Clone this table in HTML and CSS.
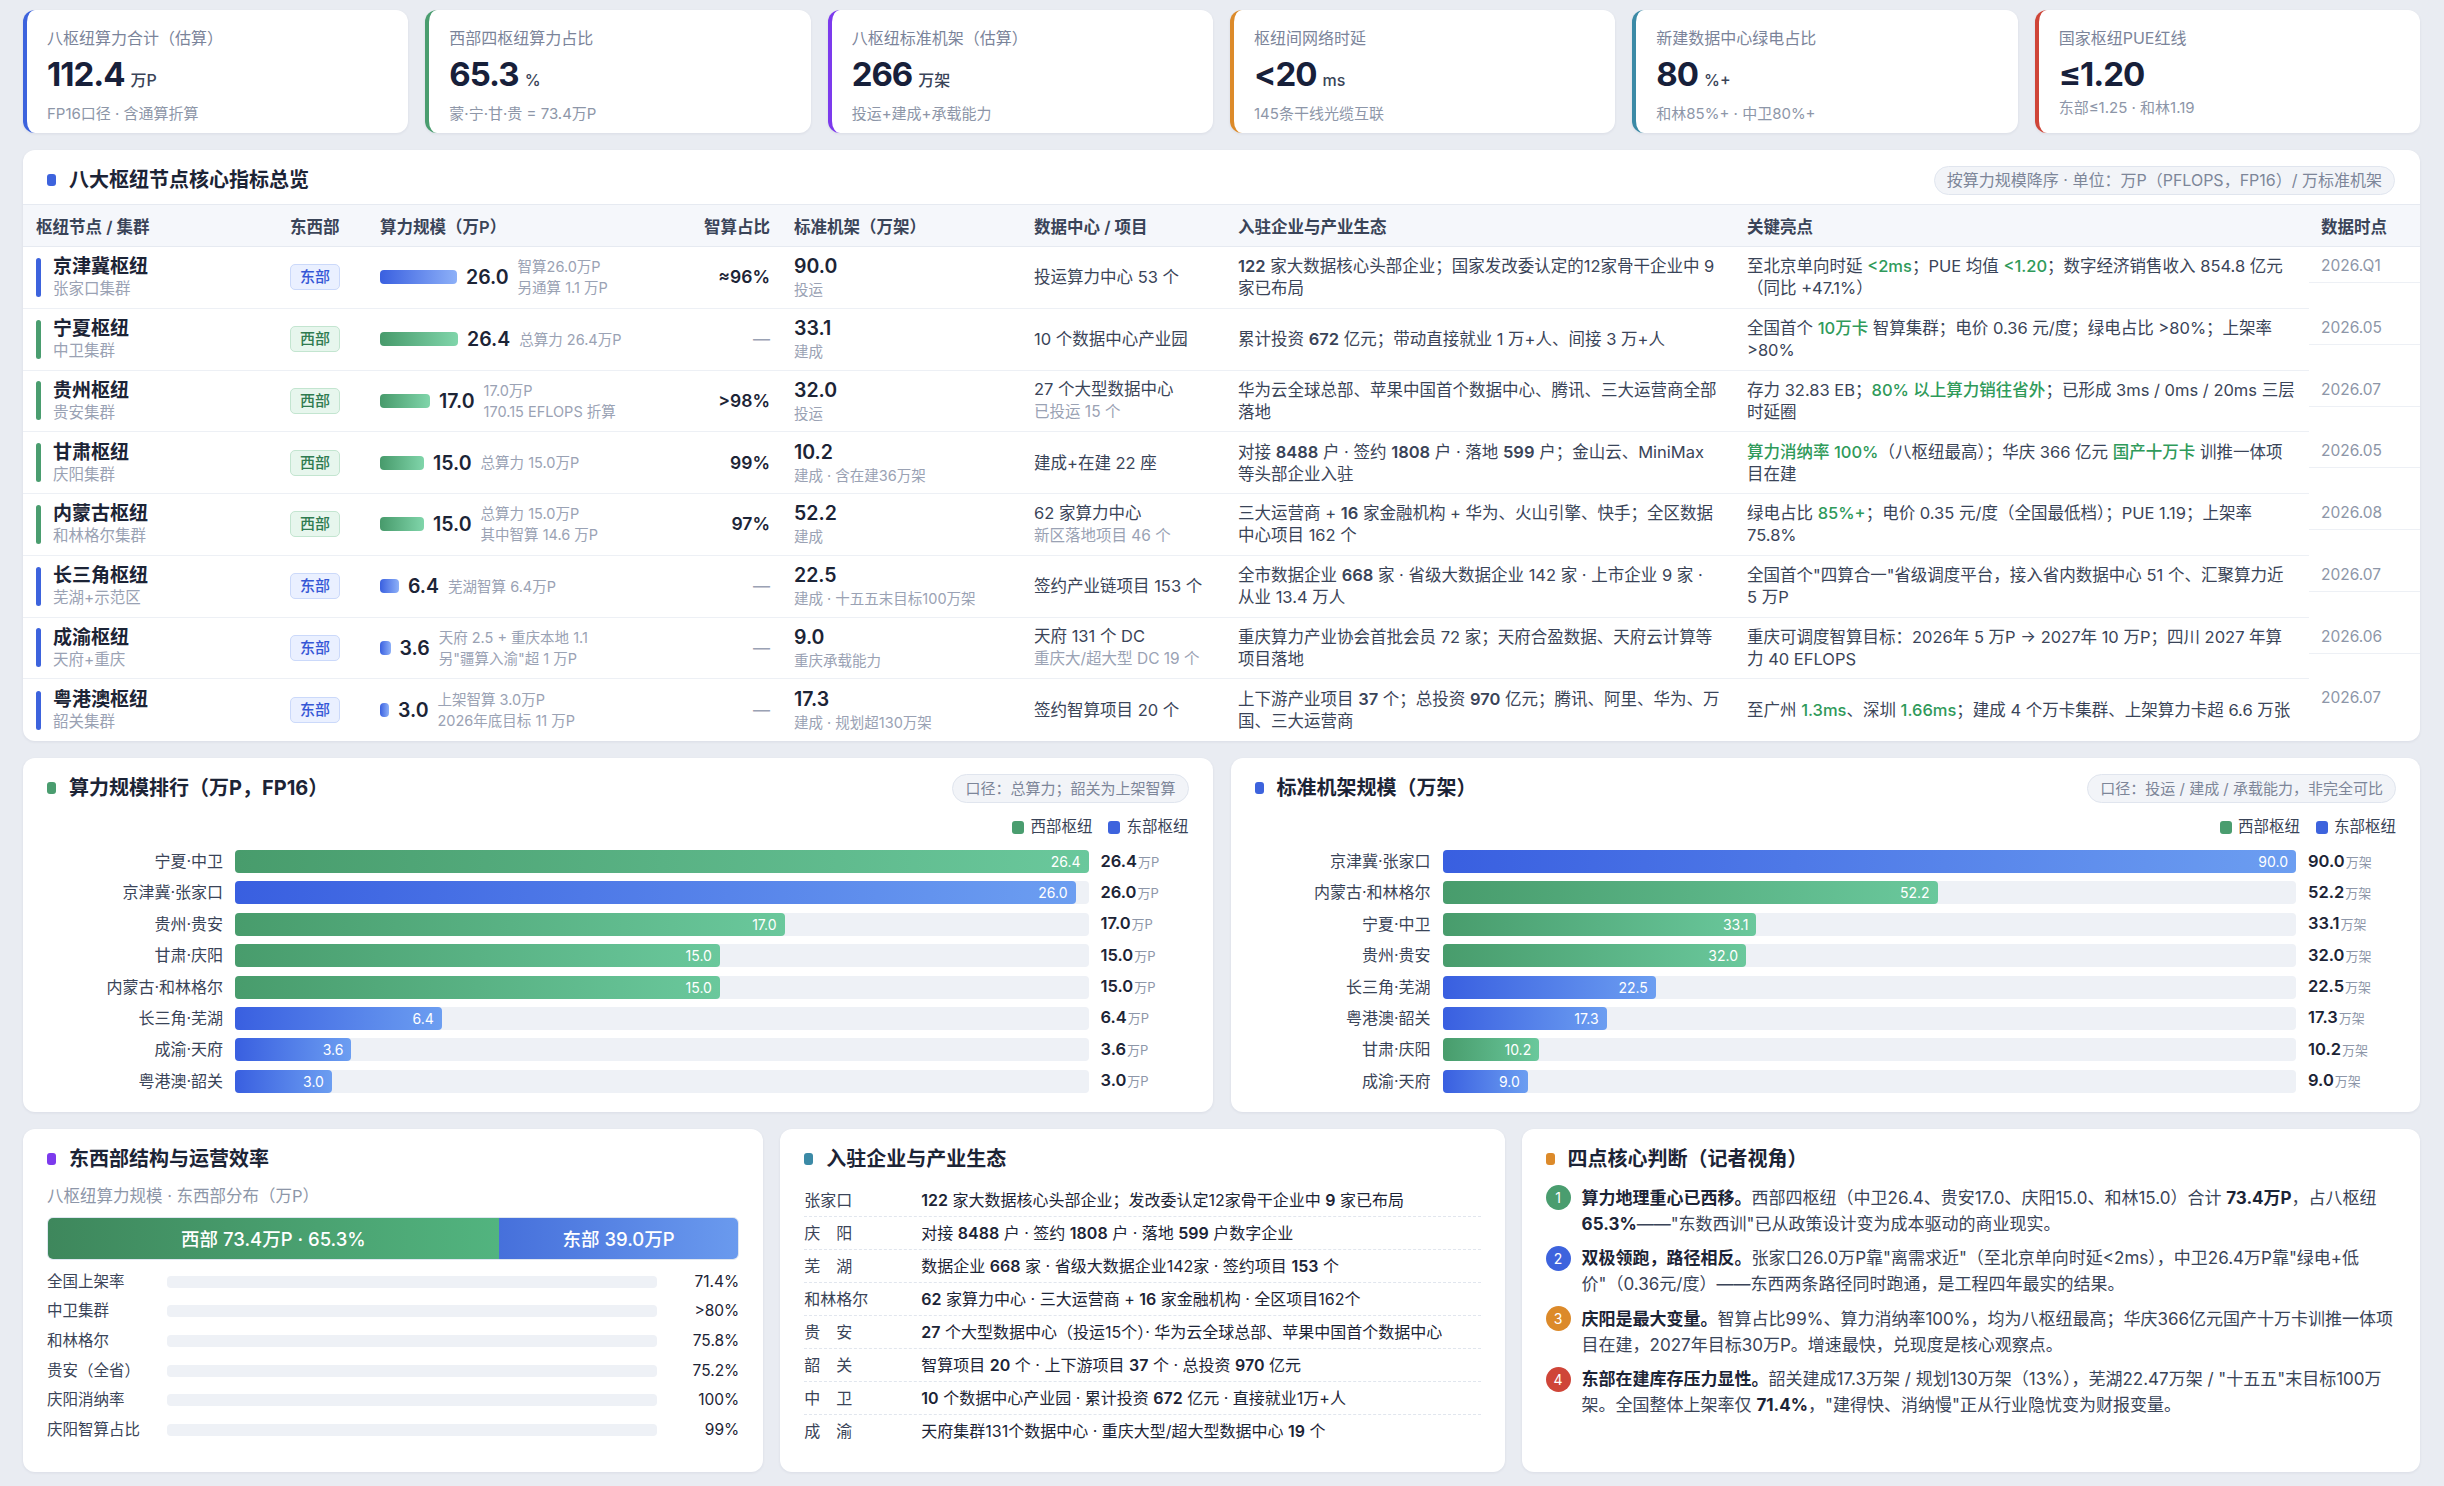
FILE: index.html
```html
<!DOCTYPE html>
<html lang="zh-CN">
<head>
<meta charset="utf-8">
<title>八大枢纽节点核心指标</title>
<link rel="stylesheet" href="styles.css">
</head>
<body>
<div class="page">

  <section class="kpis">
    <div class="kpi acc-blue">
      <div class="kpi-label">八枢纽算力合计（估算）</div>
      <div class="kpi-value">112.4<span class="unit">万P</span></div>
      <div class="kpi-sub">FP16口径 · 含通算折算</div>
    </div>
    <div class="kpi acc-green">
      <div class="kpi-label">西部四枢纽算力占比</div>
      <div class="kpi-value">65.3<span class="unit">%</span></div>
      <div class="kpi-sub">蒙·宁·甘·贵 = 73.4万P</div>
    </div>
    <div class="kpi acc-purple">
      <div class="kpi-label">八枢纽标准机架（估算）</div>
      <div class="kpi-value">266<span class="unit">万架</span></div>
      <div class="kpi-sub">投运+建成+承载能力</div>
    </div>
    <div class="kpi acc-orange">
      <div class="kpi-label">枢纽间网络时延</div>
      <div class="kpi-value">&lt;20<span class="unit">ms</span></div>
      <div class="kpi-sub">145条干线光缆互联</div>
    </div>
    <div class="kpi acc-teal">
      <div class="kpi-label">新建数据中心绿电占比</div>
      <div class="kpi-value">80<span class="unit">%+</span></div>
      <div class="kpi-sub">和林85%+ · 中卫80%+</div>
    </div>
    <div class="kpi acc-red">
      <div class="kpi-label">国家枢纽PUE红线</div>
      <div class="kpi-value">≤1.20</div>
      <div class="kpi-sub">东部≤1.25 · 和林1.19</div>
    </div>
  </section>

  <section class="card table-card">
    <div class="card-head">
      <h2 class="card-title"><i class="dot dot-blue"></i>八大枢纽节点核心指标总览</h2>
      <span class="pill pill-lg">按算力规模降序 · 单位：万P（PFLOPS，FP16）/ 万标准机架</span>
    </div>
    <table class="hub-table">
      <colgroup>
        <col class="c1"><col class="c2"><col class="c3"><col class="c4"><col class="c5"><col class="c6"><col class="c7"><col class="c8"><col>
      </colgroup>
      <thead>
        <tr>
          <th class="first">枢纽节点 / 集群</th>
          <th>东西部</th>
          <th>算力规模（万P）</th>
          <th class="right">智算占比</th>
          <th>标准机架（万架）</th>
          <th>数据中心 / 项目</th>
          <th>入驻企业与产业生态</th>
          <th>关键亮点</th>
          <th>数据时点</th>
        </tr>
      </thead>
      <tbody>
        <tr>
          <td class="first"><div class="hub east"><div><div class="hub-name">京津冀枢纽</div><div class="hub-sub">张家口集群</div></div></div></td>
          <td><span class="badge east">东部</span></td>
          <td><div class="scale"><span class="mini-bar east" style="width:77px"></span><span class="scale-val">26.0</span><span class="scale-sub">智算26.0万P<br>另通算 1.1 万P</span></div></td>
          <td class="right"><span class="pct">≈96%</span></td>
          <td><div class="rack">90.0</div><div class="rack-sub">投运</div></td>
          <td class="dc">投运算力中心 53 个</td>
          <td class="eco"><b>122</b> 家大数据核心头部企业；国家发改委认定的12家骨干企业中 9 家已布局</td>
          <td class="hl">至北京单向时延 <em>&lt;2ms</em>；PUE 均值 <em>&lt;1.20</em>；数字经济销售收入 854.8 亿元（同比 +47.1%）</td>
          <td class="date"><div class="date-inner">2026.Q1</div></td>
        </tr>
        <tr>
          <td class="first"><div class="hub west"><div><div class="hub-name">宁夏枢纽</div><div class="hub-sub">中卫集群</div></div></div></td>
          <td><span class="badge west">西部</span></td>
          <td><div class="scale"><span class="mini-bar west" style="width:78px"></span><span class="scale-val">26.4</span><span class="scale-sub">总算力 26.4万P</span></div></td>
          <td class="right"><span class="dash">—</span></td>
          <td><div class="rack">33.1</div><div class="rack-sub">建成</div></td>
          <td class="dc">10 个数据中心产业园</td>
          <td class="eco">累计投资 <b>672</b> 亿元；带动直接就业 1 万+人、间接 3 万+人</td>
          <td class="hl">全国首个 <em>10万卡</em> 智算集群；电价 0.36 元/度；绿电占比 &gt;80%；上架率 &gt;80%</td>
          <td class="date"><div class="date-inner">2026.05</div></td>
        </tr>
        <tr>
          <td class="first"><div class="hub west"><div><div class="hub-name">贵州枢纽</div><div class="hub-sub">贵安集群</div></div></div></td>
          <td><span class="badge west">西部</span></td>
          <td><div class="scale"><span class="mini-bar west" style="width:50px"></span><span class="scale-val">17.0</span><span class="scale-sub">17.0万P<br>170.15 EFLOPS 折算</span></div></td>
          <td class="right"><span class="pct">&gt;98%</span></td>
          <td><div class="rack">32.0</div><div class="rack-sub">投运</div></td>
          <td class="dc">27 个大型数据中心<br><span class="dc-sub">已投运 15 个</span></td>
          <td class="eco">华为云全球总部、苹果中国首个数据中心、腾讯、三大运营商全部落地</td>
          <td class="hl">存力 32.83 EB；<em>80% 以上算力销往省外</em>；已形成 3ms / 0ms / 20ms 三层时延圈</td>
          <td class="date"><div class="date-inner">2026.07</div></td>
        </tr>
        <tr>
          <td class="first"><div class="hub west"><div><div class="hub-name">甘肃枢纽</div><div class="hub-sub">庆阳集群</div></div></div></td>
          <td><span class="badge west">西部</span></td>
          <td><div class="scale"><span class="mini-bar west" style="width:44px"></span><span class="scale-val">15.0</span><span class="scale-sub">总算力 15.0万P</span></div></td>
          <td class="right"><span class="pct">99%</span></td>
          <td><div class="rack">10.2</div><div class="rack-sub">建成 · 含在建36万架</div></td>
          <td class="dc">建成+在建 22 座</td>
          <td class="eco">对接 <b>8488</b> 户 · 签约 <b>1808</b> 户 · 落地 <b>599</b> 户；金山云、MiniMax 等头部企业入驻</td>
          <td class="hl"><em>算力消纳率 100%</em>（八枢纽最高）；华庆 366 亿元 <em>国产十万卡</em> 训推一体项目在建</td>
          <td class="date"><div class="date-inner">2026.05</div></td>
        </tr>
        <tr>
          <td class="first"><div class="hub west"><div><div class="hub-name">内蒙古枢纽</div><div class="hub-sub">和林格尔集群</div></div></div></td>
          <td><span class="badge west">西部</span></td>
          <td><div class="scale"><span class="mini-bar west" style="width:44px"></span><span class="scale-val">15.0</span><span class="scale-sub">总算力 15.0万P<br>其中智算 14.6 万P</span></div></td>
          <td class="right"><span class="pct">97%</span></td>
          <td><div class="rack">52.2</div><div class="rack-sub">建成</div></td>
          <td class="dc">62 家算力中心<br><span class="dc-sub">新区落地项目 46 个</span></td>
          <td class="eco">三大运营商 + <b>16</b> 家金融机构 + 华为、火山引擎、快手；全区数据中心项目 162 个</td>
          <td class="hl">绿电占比 <em>85%+</em>；电价 0.35 元/度（全国最低档）；PUE 1.19；上架率 75.8%</td>
          <td class="date"><div class="date-inner">2026.08</div></td>
        </tr>
        <tr>
          <td class="first"><div class="hub east"><div><div class="hub-name">长三角枢纽</div><div class="hub-sub">芜湖+示范区</div></div></div></td>
          <td><span class="badge east">东部</span></td>
          <td><div class="scale"><span class="mini-bar east" style="width:19px"></span><span class="scale-val">6.4</span><span class="scale-sub">芜湖智算 6.4万P</span></div></td>
          <td class="right"><span class="dash">—</span></td>
          <td><div class="rack">22.5</div><div class="rack-sub">建成 · 十五五末目标100万架</div></td>
          <td class="dc">签约产业链项目 153 个</td>
          <td class="eco">全市数据企业 <b>668</b> 家 · 省级大数据企业 142 家 · 上市企业 9 家 · 从业 13.4 万人</td>
          <td class="hl">全国首个"四算合一"省级调度平台，接入省内数据中心 51 个、汇聚算力近 5 万P</td>
          <td class="date"><div class="date-inner">2026.07</div></td>
        </tr>
        <tr>
          <td class="first"><div class="hub east"><div><div class="hub-name">成渝枢纽</div><div class="hub-sub">天府+重庆</div></div></div></td>
          <td><span class="badge east">东部</span></td>
          <td><div class="scale"><span class="mini-bar east" style="width:10.5px"></span><span class="scale-val">3.6</span><span class="scale-sub">天府 2.5 + 重庆本地 1.1<br>另"疆算入渝"超 1 万P</span></div></td>
          <td class="right"><span class="dash">—</span></td>
          <td><div class="rack">9.0</div><div class="rack-sub">重庆承载能力</div></td>
          <td class="dc">天府 131 个 DC<br><span class="dc-sub">重庆大/超大型 DC 19 个</span></td>
          <td class="eco">重庆算力产业协会首批会员 72 家；天府合盈数据、天府云计算等项目落地</td>
          <td class="hl">重庆可调度智算目标：2026年 5 万P → 2027年 10 万P；四川 2027 年算力 40 EFLOPS</td>
          <td class="date"><div class="date-inner">2026.06</div></td>
        </tr>
        <tr class="last">
          <td class="first"><div class="hub east"><div><div class="hub-name">粤港澳枢纽</div><div class="hub-sub">韶关集群</div></div></div></td>
          <td><span class="badge east">东部</span></td>
          <td><div class="scale"><span class="mini-bar east" style="width:9px"></span><span class="scale-val">3.0</span><span class="scale-sub">上架智算 3.0万P<br>2026年底目标 11 万P</span></div></td>
          <td class="right"><span class="dash">—</span></td>
          <td><div class="rack">17.3</div><div class="rack-sub">建成 · 规划超130万架</div></td>
          <td class="dc">签约智算项目 20 个</td>
          <td class="eco">上下游产业项目 <b>37</b> 个；总投资 <b>970</b> 亿元；腾讯、阿里、华为、万国、三大运营商</td>
          <td class="hl">至广州 <em>1.3ms</em>、深圳 <em>1.66ms</em>；建成 4 个万卡集群、上架算力卡超 6.6 万张</td>
          <td class="date"><div class="date-inner">2026.07</div></td>
        </tr>
      </tbody>
    </table>
  </section>

  <section class="charts">
    <div class="card chart-card">
      <div class="chart-head">
        <h2 class="card-title"><i class="dot dot-green"></i>算力规模排行（万P，FP16）</h2>
        <span class="pill">口径：总算力；韶关为上架智算</span>
      </div>
      <div class="legend"><span class="lg"><i class="sq west"></i>西部枢纽</span><span class="lg"><i class="sq east"></i>东部枢纽</span></div>
      <div class="bars">
        <span class="bl">宁夏·中卫</span><div class="track"><div class="fill west" style="width:100%">26.4</div></div><span class="bv">26.4<small>万P</small></span>
        <span class="bl">京津冀·张家口</span><div class="track"><div class="fill east" style="width:98.48%">26.0</div></div><span class="bv">26.0<small>万P</small></span>
        <span class="bl">贵州·贵安</span><div class="track"><div class="fill west" style="width:64.39%">17.0</div></div><span class="bv">17.0<small>万P</small></span>
        <span class="bl">甘肃·庆阳</span><div class="track"><div class="fill west" style="width:56.82%">15.0</div></div><span class="bv">15.0<small>万P</small></span>
        <span class="bl">内蒙古·和林格尔</span><div class="track"><div class="fill west" style="width:56.82%">15.0</div></div><span class="bv">15.0<small>万P</small></span>
        <span class="bl">长三角·芜湖</span><div class="track"><div class="fill east" style="width:24.24%">6.4</div></div><span class="bv">6.4<small>万P</small></span>
        <span class="bl">成渝·天府</span><div class="track"><div class="fill east" style="width:13.64%">3.6</div></div><span class="bv">3.6<small>万P</small></span>
        <span class="bl">粤港澳·韶关</span><div class="track"><div class="fill east" style="width:11.36%">3.0</div></div><span class="bv">3.0<small>万P</small></span>
      </div>
    </div>
    <div class="card chart-card">
      <div class="chart-head">
        <h2 class="card-title"><i class="dot dot-blue"></i>标准机架规模（万架）</h2>
        <span class="pill">口径：投运 / 建成 / 承载能力，非完全可比</span>
      </div>
      <div class="legend"><span class="lg"><i class="sq west"></i>西部枢纽</span><span class="lg"><i class="sq east"></i>东部枢纽</span></div>
      <div class="bars">
        <span class="bl">京津冀·张家口</span><div class="track"><div class="fill east" style="width:100%">90.0</div></div><span class="bv">90.0<small>万架</small></span>
        <span class="bl">内蒙古·和林格尔</span><div class="track"><div class="fill west" style="width:58%">52.2</div></div><span class="bv">52.2<small>万架</small></span>
        <span class="bl">宁夏·中卫</span><div class="track"><div class="fill west" style="width:36.78%">33.1</div></div><span class="bv">33.1<small>万架</small></span>
        <span class="bl">贵州·贵安</span><div class="track"><div class="fill west" style="width:35.56%">32.0</div></div><span class="bv">32.0<small>万架</small></span>
        <span class="bl">长三角·芜湖</span><div class="track"><div class="fill east" style="width:25%">22.5</div></div><span class="bv">22.5<small>万架</small></span>
        <span class="bl">粤港澳·韶关</span><div class="track"><div class="fill east" style="width:19.22%">17.3</div></div><span class="bv">17.3<small>万架</small></span>
        <span class="bl">甘肃·庆阳</span><div class="track"><div class="fill west" style="width:11.33%">10.2</div></div><span class="bv">10.2<small>万架</small></span>
        <span class="bl">成渝·天府</span><div class="track"><div class="fill east" style="width:10%">9.0</div></div><span class="bv">9.0<small>万架</small></span>
      </div>
    </div>
  </section>

  <section class="bottom">
    <div class="card small-card">
      <h2 class="card-title"><i class="dot dot-purple"></i>东西部结构与运营效率</h2>
      <div class="subtitle">八枢纽算力规模 · 东西部分布（万P）</div>
      <div class="split">
        <div class="split-west" style="width:65.3%">西部 73.4万P · 65.3%</div>
        <div class="split-east">东部 39.0万P</div>
      </div>
      <div class="eff">
        <span class="el">全国上架率</span><span class="et"></span><span class="ev">71.4%</span>
        <span class="el">中卫集群</span><span class="et"></span><span class="ev">&gt;80%</span>
        <span class="el">和林格尔</span><span class="et"></span><span class="ev">75.8%</span>
        <span class="el">贵安（全省）</span><span class="et"></span><span class="ev">75.2%</span>
        <span class="el">庆阳消纳率</span><span class="et"></span><span class="ev">100%</span>
        <span class="el">庆阳智算占比</span><span class="et"></span><span class="ev">99%</span>
      </div>
    </div>

    <div class="card small-card">
      <h2 class="card-title"><i class="dot dot-teal"></i>入驻企业与产业生态</h2>
      <div class="eco-list">
        <div class="eco-row"><span class="eco-l">张家口</span><span class="eco-t"><b>122</b> 家大数据核心头部企业；发改委认定12家骨干企业中 <b>9</b> 家已布局</span></div>
        <div class="eco-row"><span class="eco-l">庆　阳</span><span class="eco-t">对接 <b>8488</b> 户 · 签约 <b>1808</b> 户 · 落地 <b>599</b> 户数字企业</span></div>
        <div class="eco-row"><span class="eco-l">芜　湖</span><span class="eco-t">数据企业 <b>668</b> 家 · 省级大数据企业142家 · 签约项目 <b>153</b> 个</span></div>
        <div class="eco-row"><span class="eco-l">和林格尔</span><span class="eco-t"><b>62</b> 家算力中心 · 三大运营商 + <b>16</b> 家金融机构 · 全区项目162个</span></div>
        <div class="eco-row"><span class="eco-l">贵　安</span><span class="eco-t"><b>27</b> 个大型数据中心（投运15个）· 华为云全球总部、苹果中国首个数据中心</span></div>
        <div class="eco-row"><span class="eco-l">韶　关</span><span class="eco-t">智算项目 <b>20</b> 个 · 上下游项目 <b>37</b> 个 · 总投资 <b>970</b> 亿元</span></div>
        <div class="eco-row"><span class="eco-l">中　卫</span><span class="eco-t"><b>10</b> 个数据中心产业园 · 累计投资 <b>672</b> 亿元 · 直接就业1万+人</span></div>
        <div class="eco-row"><span class="eco-l">成　渝</span><span class="eco-t">天府集群131个数据中心 · 重庆大型/超大型数据中心 <b>19</b> 个</span></div>
      </div>
    </div>

    <div class="card small-card">
      <h2 class="card-title"><i class="dot dot-orange"></i>四点核心判断（记者视角）</h2>
      <ol class="judge">
        <li><span class="num n-green">1</span><p><b>算力地理重心已西移。</b>西部四枢纽（中卫26.4、贵安17.0、庆阳15.0、和林15.0）合计 <b>73.4万P</b>，占八枢纽 <b>65.3%</b>——"东数西训"已从政策设计变为成本驱动的商业现实。</p></li>
        <li><span class="num n-blue">2</span><p><b>双极领跑，路径相反。</b>张家口26.0万P靠"离需求近"（至北京单向时延&lt;2ms），中卫26.4万P靠"绿电+低价"（0.36元/度）——东西两条路径同时跑通，是工程四年最实的结果。</p></li>
        <li><span class="num n-orange">3</span><p><b>庆阳是最大变量。</b>智算占比99%、算力消纳率100%，均为八枢纽最高；华庆366亿元国产十万卡训推一体项目在建，2027年目标30万P。增速最快，兑现度是核心观察点。</p></li>
        <li><span class="num n-red">4</span><p><b>东部在建库存压力显性。</b>韶关建成17.3万架 / 规划130万架（13%），芜湖22.47万架 / "十五五"末目标100万架。全国整体上架率仅 <b>71.4%</b>，"建得快、消纳慢"正从行业隐忧变为财报变量。</p></li>
      </ol>
    </div>
  </section>

</div>
</body>
</html>
```

FILE: styles.css
```css
* { box-sizing: border-box; }

html, body {
  margin: 0;
  background: #e9ecf2;
}

body {
  font-family: Inter, "Noto Sans CJK SC", sans-serif;
  color: #1c2436;
}

.page {
  padding: 10px 24px 18px 23px;
  display: flex;
  flex-direction: column;
  gap: 17px;
}

/* ---------- KPI cards ---------- */
.kpis {
  display: grid;
  grid-template-columns: repeat(6, 1fr);
  gap: 17px;
}

.kpi {
  background: #fff;
  border-radius: 12px;
  border-left: 4px solid #3d63dd;
  padding: 17px 20px 15px 20px;
  box-shadow: 0 1px 3px rgba(22, 34, 64, 0.07);
  height: 123px;
}

.acc-blue { border-left-color: #3d63dd; }
.acc-green { border-left-color: #4a9d6f; }
.acc-purple { border-left-color: #7c3aed; }
.acc-orange { border-left-color: #dc8a2a; }
.acc-teal { border-left-color: #3b8aa6; }
.acc-red { border-left-color: #cf4538; }

.kpi-label {
  font-size: 16px;
  line-height: 22px;
  color: #7b849a;
}

.kpi-value {
  margin-top: 5px;
  font-size: 33px;
  line-height: 40px;
  font-weight: 700;
  letter-spacing: -1px;
  color: #17203a;
}

.kpi-value .unit {
  font-size: 16px;
  font-weight: 500;
  letter-spacing: 0;
  margin-left: 6px;
  color: #3a4458;
}

.kpi-sub {
  margin-top: 4px;
  font-size: 15px;
  line-height: 20px;
  color: #8d96a8;
}

/* ---------- generic card ---------- */
.card {
  background: #fff;
  border-radius: 12px;
  box-shadow: 0 1px 3px rgba(22, 34, 64, 0.07);
}

.card-title {
  margin: 0;
  display: flex;
  align-items: center;
  gap: 13px;
  font-size: 20px;
  line-height: 24px;
  font-weight: 700;
  color: #1c2436;
}

.dot {
  display: inline-block;
  width: 9px;
  height: 12px;
  border-radius: 3px;
  flex: none;
}
.dot-blue { background: #3d63dd; }
.dot-green { background: #4a9d6f; }
.dot-purple { background: #7c3aed; }
.dot-teal { background: #3b8aa6; }
.dot-orange { background: #dc8a2a; }

.pill {
  display: inline-block;
  font-size: 15px;
  line-height: 19px;
  padding: 4px 12px;
  border-radius: 15px;
  background: #f2f4f8;
  border: 1px solid #e0e5ee;
  color: #7d8699;
  white-space: nowrap;
}
.pill-lg {
  font-size: 16px;
  line-height: 19px;
}

/* ---------- table card ---------- */
.table-card {
  overflow: hidden;
}

.card-head {
  display: flex;
  justify-content: space-between;
  align-items: center;
  padding: 16px 25px 10px 24px;
  height: 54px;
}

.hub-table {
  width: 100%;
  border-collapse: separate;
  border-spacing: 0;
  table-layout: fixed;
}

.hub-table col.c1 { width: 255px; }
.hub-table col.c2 { width: 90px; }
.hub-table col.c3 { width: 322px; }
.hub-table col.c4 { width: 92px; }
.hub-table col.c5 { width: 240px; }
.hub-table col.c6 { width: 204px; }
.hub-table col.c7 { width: 509px; }
.hub-table col.c8 { width: 574px; }

.hub-table thead tr { height: 43px; }

.hub-table th {
  background: #f5f7fb;
  border-top: 1px solid #e6eaf1;
  border-bottom: 1px solid #e6eaf1;
  padding: 0 12px;
  text-align: left;
  font-size: 16.5px;
  font-weight: 600;
  color: #3a4458;
  white-space: nowrap;
}

.hub-table th.first,
.hub-table td.first { padding-left: 13px; }

.hub-table th.right,
.hub-table td.right { text-align: right; }

.hub-table tbody tr { height: 61.75px; }

.hub-table td {
  padding: 6px 12px;
  border-bottom: 1px solid #edf0f5;
  vertical-align: middle;
  font-size: 16.5px;
  line-height: 22px;
  color: #3a4458;
}

.hub-table tr.last td { border-bottom: none; }

.hub {
  display: flex;
  align-items: center;
  gap: 12px;
}
.hub::before {
  content: "";
  display: block;
  width: 5px;
  height: 39px;
  border-radius: 3px;
  background: #3d63dd;
}
.hub.west::before { background: #4a9d6f; }

.hub-name {
  font-size: 19px;
  line-height: 23px;
  font-weight: 700;
  color: #1c2436;
}
.hub-sub {
  font-size: 15.5px;
  line-height: 21px;
  color: #9aa2b4;
}

.badge {
  display: inline-block;
  width: 50px;
  height: 26px;
  line-height: 24px;
  text-align: center;
  font-size: 15px;
  font-weight: 500;
  border-radius: 5px;
  border: 1px solid;
}
.badge.east { color: #3557d6; background: #eaf0ff; border-color: #cbd9fa; }
.badge.west { color: #2f7b50; background: #e7f6ed; border-color: #c3e5d0; }

.scale {
  display: flex;
  align-items: center;
  gap: 9px;
}
.mini-bar {
  display: block;
  height: 14px;
  border-radius: 4px;
  flex: none;
}
.mini-bar.east { background: linear-gradient(90deg, #3a60e0, #8db0f8); }
.mini-bar.west { background: linear-gradient(90deg, #479a6b, #80d5aa); }

.scale-val {
  font-size: 19.5px;
  line-height: 24px;
  font-weight: 600;
  color: #1c2436;
}
.scale-sub {
  font-size: 14.5px;
  line-height: 21px;
  color: #9aa2b4;
}

.pct {
  font-size: 17.5px;
  font-weight: 600;
  color: #1c2436;
}
.dash {
  color: #9aa2b4;
  font-size: 17px;
}

.rack {
  font-size: 19.5px;
  line-height: 26px;
  font-weight: 600;
  color: #1c2436;
}
.rack-sub {
  font-size: 14.5px;
  line-height: 22px;
  color: #9aa2b4;
}

.dc { color: #3a4458; }
.dc-sub { color: #9aa2b4; font-size: 15.5px; }

.eco { color: #2d3649; }
.eco b { font-weight: 600; }

.hl em {
  font-style: normal;
  color: #2f9a5a;
  font-weight: 500;
}

.hub-table td.date {
  vertical-align: top;
  padding: 0;
  border-bottom: none;
}
.date-inner {
  padding: 10px 12px 7px;
  line-height: 18px;
  font-size: 15.5px;
  color: #8d96a8;
  border-bottom: 1px solid #edf0f5;
}
.hub-table tr.last .date-inner { border-bottom: none; }

/* ---------- charts ---------- */
.charts {
  display: grid;
  grid-template-columns: 1fr 1fr;
  gap: 18px;
}

.chart-card {
  padding: 15px 24px 19px 24px;
}

.chart-head {
  display: flex;
  justify-content: space-between;
  align-items: center;
  height: 30px;
}

.legend {
  display: flex;
  justify-content: flex-end;
  gap: 16px;
  margin-top: 14px;
  font-size: 15.5px;
  line-height: 20px;
  color: #3a4458;
}
.lg {
  display: inline-flex;
  align-items: center;
  gap: 6px;
}
.sq {
  display: inline-block;
  width: 12px;
  height: 13px;
  border-radius: 3px;
}
.sq.west { background: #4a9d6f; }
.sq.east { background: #3d63dd; }

.bars {
  margin-top: 13px;
  display: grid;
  grid-template-columns: 176px 1fr 88px;
  grid-auto-rows: 23px;
  column-gap: 12px;
  row-gap: 8.4px;
  align-items: center;
}

.bl {
  text-align: right;
  font-size: 16px;
  line-height: 23px;
  color: #3a4458;
  white-space: nowrap;
}

.track {
  height: 23px;
  background: #eef1f6;
  border-radius: 4px;
}

.fill {
  height: 23px;
  border-radius: 4px;
  color: #fff;
  font-size: 14px;
  line-height: 23px;
  text-align: right;
  padding-right: 8px;
}
.fill.west { background: linear-gradient(90deg, #489c6c, #6ac89c); }
.fill.east { background: linear-gradient(90deg, #395fe0, #6c9ef1); }

.bv {
  font-size: 16.5px;
  line-height: 23px;
  font-weight: 600;
  color: #1c2436;
  white-space: nowrap;
}
.bv small {
  font-size: 13px;
  font-weight: 400;
  color: #8d96a8;
  margin-left: 1px;
}

/* ---------- bottom cards ---------- */
.bottom {
  display: grid;
  grid-template-columns: 740fr 724fr 898fr;
  gap: 17px;
}

.small-card {
  padding: 18px 24px 25px 24px;
}

.subtitle {
  margin-top: 14px;
  font-size: 16.5px;
  line-height: 22px;
  color: #8d96a8;
}

.split {
  margin-top: 10px;
  display: flex;
  height: 43px;
  border-radius: 6px;
  overflow: hidden;
  border: 1px solid #dfe6f0;
  color: #fff;
  font-size: 18.5px;
  font-weight: 500;
}
.split-west {
  display: flex;
  align-items: center;
  justify-content: center;
  background: linear-gradient(90deg, #3e875c, #52b47f);
}
.split-east {
  flex: 1;
  display: flex;
  align-items: center;
  justify-content: center;
  background: linear-gradient(90deg, #4670db, #6a9aee);
}

.eff {
  margin-top: 11px;
  display: grid;
  grid-template-columns: 108px 1fr 70px;
  column-gap: 12px;
  row-gap: 7.6px;
  align-items: center;
  font-size: 15.5px;
  line-height: 22px;
  color: #3a4458;
}
.et {
  height: 12px;
  border-radius: 4px;
  background: #eef1f6;
}
.ev {
  text-align: right;
  color: #1c2436;
}

.eco-list {
  margin-top: 13px;
}
.eco-row {
  display: flex;
  align-items: center;
  padding: 5px 0;
  border-bottom: 1px dashed #e1e6ee;
  font-size: 16px;
  line-height: 22px;
}
.eco-row:last-child { border-bottom: none; }
.eco-l {
  width: 117px;
  flex: none;
  color: #3a4458;
}
.eco-t {
  color: #1c2436;
  white-space: nowrap;
}
.eco-t b { font-weight: 600; }

.judge {
  list-style: none;
  margin: 14px 0 0 0;
  padding: 0;
  display: flex;
  flex-direction: column;
  gap: 8.5px;
}
.judge li {
  display: flex;
  align-items: flex-start;
  gap: 11px;
}
.num {
  flex: none;
  width: 25px;
  height: 25px;
  margin-top: 0.5px;
  border-radius: 50%;
  color: #fff;
  font-size: 14px;
  line-height: 25px;
  text-align: center;
}
.n-green { background: #4a9d6f; }
.n-blue { background: #3d63dd; }
.n-orange { background: #dc8a2a; }
.n-red { background: #cf4538; }

.judge p {
  margin: 0;
  font-size: 17px;
  line-height: 26px;
  color: #3a4458;
}
.judge b {
  font-weight: 700;
  color: #1c2436;
}
```
